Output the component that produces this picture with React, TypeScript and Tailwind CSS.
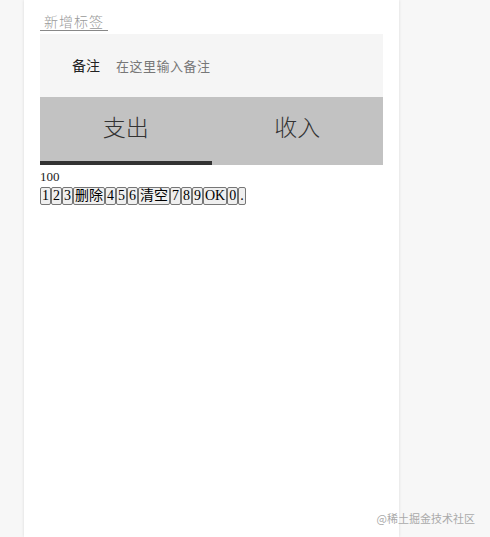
import React, { useState } from 'react';

const keys = ['1', '2', '3', '删除', '4', '5', '6', '清空', '7', '8', '9', 'OK', '0', '.'];

const App = () => {
  const [tab, setTab] = useState<'-' | '+'>('-');
  const [amount] = useState('100');

  return (
    <div className="relative min-h-[537px] bg-[#f7f7f7] flex font-['Liberation_Serif','Noto_Sans_CJK_SC',serif]">
      <div className="ml-[24px] w-[375px] min-h-[537px] bg-white shadow-[0_0_3px_rgba(0,0,0,0.12)] px-4 pt-[13px]">
        {/* 标签 */}
        <div className="flex">
          <span className="px-1 pb-[1px] text-[14px] leading-[16px] tracking-[1px] text-[#999] border-b border-[#888] font-['Noto_Sans_CJK_SC',sans-serif] font-light">
            新增标签
          </span>
        </div>

        {/* 备注 */}
        <label className="mt-[3px] h-[63px] bg-[#f5f5f5] flex items-center pl-8 font-['Noto_Sans_CJK_SC',sans-serif]">
          <span className="text-[14px] text-[#222] mr-4">备注</span>
          <input
            className="bg-transparent outline-none text-[13px] tracking-[0.5px] text-[#333] placeholder:text-[#777] flex-1"
            placeholder="在这里输入备注"
          />
        </label>

        {/* 支出 / 收入 */}
        <div className="bg-[#c2c2c2] flex">
          {([['-', '支出'], ['+', '收入']] as const).map(([k, label]) => (
            <button
              key={k}
              onClick={() => setTab(k)}
              className={`flex-1 h-[68px] flex items-center justify-center text-[23px] font-light text-[#333] border-b-4 ${
                tab === k ? 'border-[#333]' : 'border-transparent'
              }`}
            >
              {label}
            </button>
          ))}
        </div>

        {/* 数字键盘 */}
        <div className="mt-[4px] text-[13px] leading-[15px] text-[#222]">{amount}</div>
        <div className="mt-[3px] flex">
          {keys.map((k) => (
            <button
              key={k}
              className="h-[18px] px-[1px] border border-[#767676] rounded-[2px] bg-[#efefef] text-[14px] leading-[16px] text-black"
            >
              {k}
            </button>
          ))}
        </div>
      </div>

      <div className="absolute right-[15px] bottom-[11px] text-[11px] text-[#aaa] font-['Noto_Sans_CJK_SC',sans-serif]">
        @稀土掘金技术社区
      </div>
    </div>
  );
};

export default App;
